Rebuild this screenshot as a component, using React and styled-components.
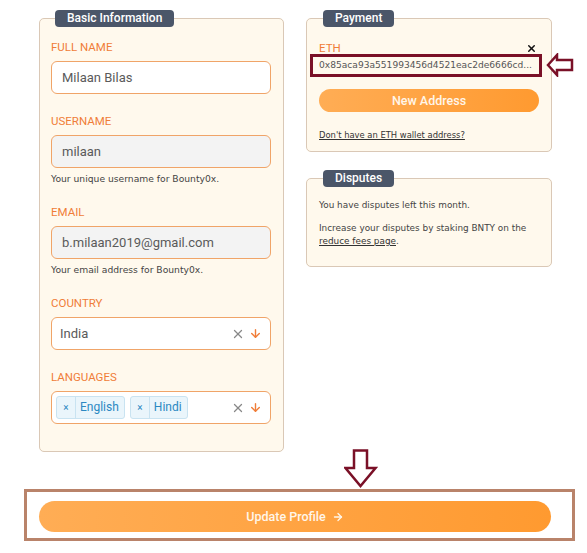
import React from 'react';
import styled, { createGlobalStyle } from 'styled-components';
import { X, ArrowDown, ArrowRight } from 'lucide-react';

const GlobalStyle = createGlobalStyle`
    body {
        margin: 0;
        background: #ffffff;
        font-family: Roboto, "Liberation Sans", sans-serif;
    }
`;

const Page = styled.div`
    width: 587px;
    padding-top: 10px;
`;

const TopRow = styled.div`
    display: flex;
    align-items: flex-start;
    gap: 22px;
    padding-left: 39px;
`;

const Column = styled.div`
    display: flex;
    flex-direction: column;
    gap: 18px;
`;

const Card = styled.fieldset`
    margin: 0;
    box-sizing: border-box;
    width: ${props => props.width}px;
    background: #fff9ed;
    border: 1px solid #dac8b6;
    border-radius: 5px;
    padding: ${props => props.pad};
    min-inline-size: 0;
`;

const Legend = styled.legend`
    box-sizing: border-box;
    height: 17px;
    margin-left: 4px;
    padding: 0 12px;
    background: #4b5669;
    border-radius: 4px;
    color: #ffffff;
    font-size: 12px;
    font-weight: 500;
    line-height: 17px;
    text-align: left;
`;

const Fields = styled.div`
    display: flex;
    flex-direction: column;
    gap: 20px;
`;

const Field = styled.div`
    display: flex;
    flex-direction: column;
`;

const Label = styled.div`
    color: #f07d38;
    font-size: 11.5px;
    line-height: 14px;
    margin-bottom: ${props => (props.flush ? 0 : 7)}px;
`;

const Input = styled.div`
    box-sizing: border-box;
    height: 33px;
    padding: 0 10px;
    display: flex;
    align-items: center;
    background: ${props => (props.grey ? '#f3f3f3' : '#ffffff')};
    border: 1px solid #f0a468;
    border-radius: 6px;
    color: #5a5a5a;
    font-size: 13px;
`;

const Select = styled.div`
    box-sizing: border-box;
    height: 33px;
    padding: 0 8px 0 ${props => (props.tags ? '4px' : '8px')};
    display: flex;
    align-items: center;
    gap: 5px;
    background: #ffffff;
    border: 1px solid #f0a468;
    border-radius: 6px;
    color: #5a5a5a;
    font-size: 13px;
`;

const Value = styled.div`
    flex: 1;
    display: flex;
    gap: 5px;
`;

const Tag = styled.div`
    display: flex;
    align-items: stretch;
    height: 23px;
    box-sizing: border-box;
    background: #eaf5fb;
    border: 1px solid #c9e3f1;
    border-radius: 3px;
    color: #2b88c2;
    font-size: 12px;
    line-height: 21px;
`;

const TagRemove = styled.span`
    width: 18px;
    text-align: center;
    font-size: 10px;
    border-right: 1px solid #c9e3f1;
`;

const TagText = styled.span`
    padding: 0 5px 0 4px;
`;

const Icons = styled.div`
    display: flex;
    align-items: center;
    gap: 4px;
`;

const Help = styled.div`
    margin-top: 5px;
    color: #444444;
    font-family: "DejaVu Sans", sans-serif;
    font-size: 9.2px;
    line-height: 12px;
`;

const LabelRow = styled.div`
    display: flex;
    justify-content: space-between;
    align-items: center;
    padding-right: 2px;
`;

const Address = styled.div`
    position: relative;
    margin-top: 4px;
    color: #555555;
    font-family: "DejaVu Sans", sans-serif;
    font-size: 9.1px;
    line-height: 12px;
    white-space: nowrap;

    &::after {
        content: '';
        position: absolute;
        left: -9px;
        right: -3px;
        top: -5px;
        bottom: -6px;
        border: 3px solid #7a1027;
    }
`;

const SideArrow = styled.svg`
    position: absolute;
    right: -35px;
    top: -6px;
`;

const PillButton = styled.button`
    display: flex;
    align-items: center;
    justify-content: center;
    gap: 6px;
    width: 100%;
    height: ${props => props.h}px;
    margin-top: ${props => props.mt || 0}px;
    border: none;
    border-radius: 16px;
    background: linear-gradient(90deg, #ffad55, #ff9a30);
    color: #fff6ea;
    font-family: Roboto, sans-serif;
    font-size: 12.5px;
    font-weight: 500;
    padding: 0;
`;

const SmallLink = styled.a`
    display: block;
    margin-top: 17px;
    color: #333333;
    font-family: "DejaVu Sans", sans-serif;
    font-size: 8.4px;
    line-height: 12px;
    text-decoration: underline;
`;

const Text = styled.p`
    margin: 0;
    color: #444444;
    font-family: "DejaVu Sans", sans-serif;
    font-size: 8.9px;
    line-height: 13px;
    & + & {
        margin-top: 10px;
    }
    a {
        color: #333333;
        text-decoration: underline;
    }
`;

const BottomBox = styled.div`
    position: relative;
    box-sizing: border-box;
    width: 551px;
    margin: 37px 0 0 24px;
    border: 3px solid #b9836a;
    padding: 9px 21px 6px 12px;
`;

const DownArrow = styled.svg`
    position: absolute;
    left: 317px;
    top: -43px;
`;

function SelectIcons() {
    return (
        <Icons>
            <X size={14} color="#888888" strokeWidth={2.2} />
            <ArrowDown size={13} color="#f07d38" strokeWidth={2.6} />
        </Icons>
    );
}

export default function App() {
    return (
        <Page>
            <GlobalStyle />
            <TopRow>
                <Card width={245} pad="13px 12px 27px 11px">
                    <Legend>Basic Information</Legend>
                    <Fields>
                        <Field>
                            <Label>FULL NAME</Label>
                            <Input>Milaan Bilas</Input>
                        </Field>
                        <Field>
                            <Label>USERNAME</Label>
                            <Input grey>milaan</Input>
                            <Help>Your unique username for Bounty0x.</Help>
                        </Field>
                        <Field>
                            <Label>EMAIL</Label>
                            <Input grey>b.milaan2019@gmail.com</Input>
                            <Help>Your email address for Bounty0x.</Help>
                        </Field>
                        <Field>
                            <Label>COUNTRY</Label>
                            <Select>
                                <Value>India</Value>
                                <SelectIcons />
                            </Select>
                        </Field>
                        <Field>
                            <Label>LANGUAGES</Label>
                            <Select tags>
                                <Value>
                                    <Tag><TagRemove>×</TagRemove><TagText>English</TagText></Tag>
                                    <Tag><TagRemove>×</TagRemove><TagText>Hindi</TagText></Tag>
                                </Value>
                                <SelectIcons />
                            </Select>
                        </Field>
                    </Fields>
                </Card>
                <Column>
                    <Card width={246} pad="14px 12px 10px 12px">
                        <Legend>Payment</Legend>
                        <LabelRow>
                            <Label flush>ETH</Label>
                            <X size={11} color="#111111" strokeWidth={3.2} />
                        </LabelRow>
                        <Address>
                            0x85aca93a551993456d4521eac2de6666cd...
                            <SideArrow width="28" height="24" viewBox="0 0 28 24">
                                <polygon
                                    points="2,12 11,2 11,7 26,7 26,17 11,17 11,22"
                                    fill="#ffffff"
                                    stroke="#7a1027"
                                    strokeWidth="2.5"
                                />
                            </SideArrow>
                        </Address>
                        <PillButton h={23} mt={18}>New Address</PillButton>
                        <SmallLink href="#">Don't have an ETH wallet address?</SmallLink>
                    </Card>
                    <Card width={246} pad="12px 12px 18px 12px">
                        <Legend>Disputes</Legend>
                        <Text>You have disputes left this month.</Text>
                        <Text>
                            Increase your disputes by staking BNTY on the <a href="#">reduce fees page</a>.
                        </Text>
                    </Card>
                </Column>
            </TopRow>
            <BottomBox>
                <DownArrow width="34" height="40" viewBox="0 0 34 40">
                    <polygon
                        points="10,1.5 23,1.5 23,19 31.5,19 16.5,37 1.5,19 10,19"
                        fill="#ffffff"
                        stroke="#7a1027"
                        strokeWidth="2.5"
                    />
                </DownArrow>
                <PillButton h={31}>
                    Update Profile <ArrowRight size={12} strokeWidth={2.6} />
                </PillButton>
            </BottomBox>
        </Page>
    );
}
